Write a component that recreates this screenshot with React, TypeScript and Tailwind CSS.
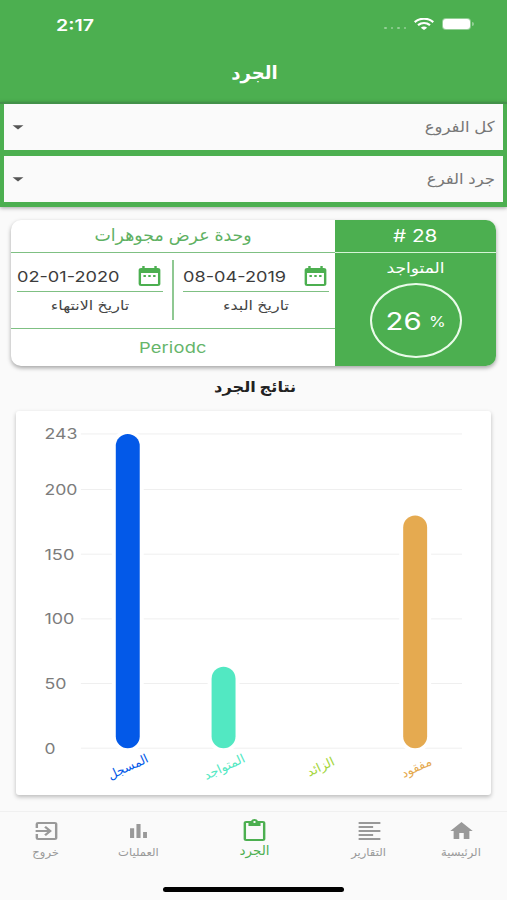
import { MdArrowDropDown, MdDateRange, MdExitToApp, MdHome } from "react-icons/md";
import type { ReactNode } from "react";

const ticks = [243, 200, 150, 100, 50, 0];

const bars = [
  { label: "المسجل", value: 243, x: 100, color: "#0359e8", width: 43, labelX: 114, labelY: 360 },
  { label: "المتواجد", value: 63, x: 196, color: "#52e8c2", width: 44, labelX: 210.5, labelY: 360 },
  { label: "الزائد", value: 0, x: 292, color: "#a4d63c", width: 29, labelX: 307, labelY: 360 },
  { label: "مفقود", value: 180, x: 388, color: "#e5aa50", width: 32, labelX: 403, labelY: 360.5 },
];

const yFor = (value: number) => 337.5 - value * 1.296;

const PollIcon = () => (
  <svg viewBox="0 0 24 24" preserveAspectRatio="none" fill="currentColor" className="w-[29px] h-6">
    <path d="M5 9.2h3.4V19H5zM10.3 5h3.4v14h-3.4zM15.8 13H19v6h-3.2z" />
  </svg>
);

const ReportIcon = () => (
  <svg viewBox="0 0 24 24" preserveAspectRatio="none" fill="currentColor" className="w-[29px] h-6">
    <path d="M3 2.9h18v2.2H3zM3 6.9h12v2.2H3zM3 10.9h18v2.2H3zM3 14.9h12v2.2H3zM3 18.9h18v2.2H3z" />
  </svg>
);

const ClipboardIcon = () => (
  <svg viewBox="0 0 24 24" preserveAspectRatio="none" fill="currentColor" className="w-[29px] h-6">
    <path d="M19 2h-4.18C14.4.84 13.3 0 12 0S9.6.84 9.18 2H5c-1.1 0-2 .9-2 2v16c0 1.1.9 2 2 2h14c1.1 0 2-.9 2-2V4c0-1.1-.9-2-2-2zm-7 0c.55 0 1 .45 1 1s-.45 1-1 1-1-.45-1-1 .45-1 1-1zm7 18H5V4h2v3h10V4h2v16z" />
  </svg>
);

const StatusBar = () => (
  <div className="flex h-12 items-center justify-between pl-[56px] pr-[33px] text-white">
    <span className="origin-left scale-x-[1.22] pt-[2px] text-[16px] font-semibold leading-none">2:17</span>
    <div className="flex items-center">
      <div className="mr-[8px] mt-2 flex gap-[4px]">
        {[0, 1, 2, 3].map((dot) => (
          <span key={dot} className="size-[2.5px] rounded-full bg-white/40" />
        ))}
      </div>
      <svg viewBox="0 0 20 12" preserveAspectRatio="none" className="mr-[8px] h-3 w-5" fill="none" stroke="white" strokeWidth="2.2">
        <path d="M.7 4.1C6-.4 14-.4 19.3 4.1" />
        <path d="M4 7.2c3.6-2.9 8.4-2.9 12 0" />
        <path d="M6.8 9.7Q10 7.2 13.2 9.7L10 12z" fill="white" stroke="none" />
      </svg>
      <div className="h-[12px] w-[29px] rounded-[4px] bg-white/40 p-px">
        <div className="h-full rounded-[3px] bg-white" />
      </div>
      <span className="ml-px h-1 w-[2px] rounded-r-full bg-white/40" />
    </div>
  </div>
);

const SelectField = ({ label }: { label: string }) => (
  <div className="flex h-[46px] items-center justify-between bg-[#fafafa] pl-[5px] pr-[8px] text-[#777]">
    <MdArrowDropDown preserveAspectRatio="none" className="h-5 w-[26px] -ml-1 text-[#555]" />
    <span dir="rtl" className="origin-right scale-x-[1.1] text-[15px]">{label}</span>
  </div>
);

const DateBlock = ({ date, label }: { date: string; label: string }) => (
  <div className="flex w-[146px] flex-col">
    <div className="flex h-[32px] items-center justify-between border-b border-[#7fc083]">
      <span className="origin-left scale-x-[1.21] whitespace-nowrap pt-[3px] text-[15px] text-[#3c3c3c]">{date}</span>
      <MdDateRange preserveAspectRatio="none" className="-mr-px mt-px h-6 w-[29px] text-[#4caf50]" />
    </div>
    <div dir="rtl" className="scale-x-[1.22] pt-[3px] text-center text-[13px] leading-5 text-[#444]">{label}</div>
  </div>
);

const InventoryCard = () => (
  <div className="mx-[11px] mt-[13px] flex h-[146px] overflow-hidden rounded-[10px] bg-white shadow-[0_2px_4px_rgba(0,0,0,0.35)]">
    <div className="flex w-[324px] flex-col">
      <div dir="rtl" className="flex h-[33px] items-center justify-center border-b-[1.5px] border-[#7fc083] text-[17px] text-[#5fb163]">
        <span className="scale-x-[1.02]">وحدة عرض مجوهرات</span>
      </div>
      <div className="flex flex-1 justify-between px-[6px] pt-[7px]">
        <DateBlock date="02-01-2020" label="تاريخ الانتهاء" />
        <div className="h-[60px] w-[2px] bg-[#8fc892]" />
        <DateBlock date="08-04-2019" label="تاريخ البدء" />
      </div>
      <div className="flex h-[38px] items-center justify-center border-t border-[#7fc083] text-[#66b56a]">
        <span className="scale-x-[1.22] pt-[2px] text-[15px] tracking-[0.01em]">Periodc</span>
      </div>
    </div>
    <div className="flex flex-1 flex-col items-center bg-[#4caf50] text-white">
      <div className="flex h-[33px] w-full items-center justify-center border-b-[1.5px] border-[#d5f5d6]">
        <span className="scale-x-[1.22] pt-[2px] text-[17px]"># 28</span>
      </div>
      <div dir="rtl" className="flex h-[30px] scale-x-[1.14] items-center text-[15px]">المتواجد</div>
      <div className="flex h-[75px] w-[92px] items-center justify-center rounded-[50%] border-2 border-[#e9fbe9]">
        <div className="flex scale-x-[1.22] items-center gap-[6px] pt-[2px]">
          <span className="text-[24px] leading-8">26</span>
          <span className="text-[14px]">%</span>
        </div>
      </div>
    </div>
  </div>
);

const ResultsChart = () => (
  <div className="mx-4 h-[384px] rounded-[3px] bg-white shadow-[0_2px_4px_rgba(0,0,0,0.25)]">
    <svg viewBox="0 0 476 384" className="h-full w-full">
      {ticks.map((tick) => (
        <g key={tick}>
          <line x1={65} x2={447} y1={yFor(tick)} y2={yFor(tick)} stroke="#efefef" />
          <text
            x={28.5}
            y={yFor(tick) + 5.5}
            fontSize={14.5}
            fill="#7c7c7c"
            textLength={tick === 0 ? 11 : tick === 50 ? 22 : tick < 200 ? 30 : 33}
            lengthAdjust="spacingAndGlyphs"
          >
            {tick}
          </text>
        </g>
      ))}
      {bars.map((bar) => (
        <g key={bar.label}>
          {bar.value > 0 && (
            <rect
              x={bar.x}
              y={yFor(bar.value)}
              width={24}
              height={bar.value * 1.296}
              rx={12}
              fill={bar.color}
              stroke="#fff"
              strokeWidth={8}
              paintOrder="stroke"
            />
          )}
          <text
            x={bar.labelX}
            y={bar.labelY}
            fontSize={12.5}
            fill={bar.color}
            textAnchor="middle"
            transform={`rotate(-25 ${bar.labelX} ${bar.labelY})`}
            textLength={bar.width}
            lengthAdjust="spacingAndGlyphs"
          >
            {bar.label}
          </text>
        </g>
      ))}
    </svg>
  </div>
);

const Tab = ({ icon, label }: { icon: ReactNode; label: string }) => (
  <div className="flex w-[92px] flex-col items-center pt-[7px] text-[#999]">
    {icon}
    <span dir="rtl" className="scale-x-[1.05] text-[11px] leading-[18px]">{label}</span>
  </div>
);

const BottomTabs = () => (
  <div className="mt-[16px] h-[89px] border-t border-[#f0f0f0] bg-[#fafafa]">
    <div className="flex h-[75px]">
      <Tab icon={<MdExitToApp preserveAspectRatio="none" className="h-6 w-[29px]" />} label="خروج" />
      <Tab icon={<PollIcon />} label="العمليات" />
      <div className="flex flex-1 flex-col items-center pl-px pt-[7px] text-[#4caf50]">
        <ClipboardIcon />
        <span dir="rtl" className="-mt-[2px] scale-x-[1.04] text-[13px] leading-[18px]">الجرد</span>
      </div>
      <Tab icon={<ReportIcon />} label="التقارير" />
      <Tab icon={<MdHome preserveAspectRatio="none" className="h-6 w-[27px]" />} label="الرئيسية" />
    </div>
    <div className="mx-auto h-[5px] w-[181px] rounded-full bg-black" />
  </div>
);

export default function App() {
  return (
    <div className="h-[900px] w-[507px] overflow-hidden bg-[#fafafa] font-['Inter','DejaVu_Sans',sans-serif]">
      <header className="h-[102px] bg-[#4caf50]">
        <StatusBar />
        <h1 dir="rtl" className="pl-0.5 pt-[11px] text-center text-lg font-bold text-white">الجرد</h1>
      </header>
      <div className="flex h-[105px] flex-col gap-[6px] border-t-2 border-[#43914a] bg-[#4caf50] px-1 shadow-[0_1px_4px_rgba(0,0,0,0.35)]">
        <SelectField label="كل الفروع" />
        <SelectField label="جرد الفرع" />
      </div>
      <InventoryCard />
      <h2 dir="rtl" className="h-[45px] scale-x-[1.08] pl-[3px] pt-[9px] text-center text-[15px] font-bold leading-6 text-[#222]">نتائج الجرد</h2>
      <ResultsChart />
      <BottomTabs />
    </div>
  );
}
